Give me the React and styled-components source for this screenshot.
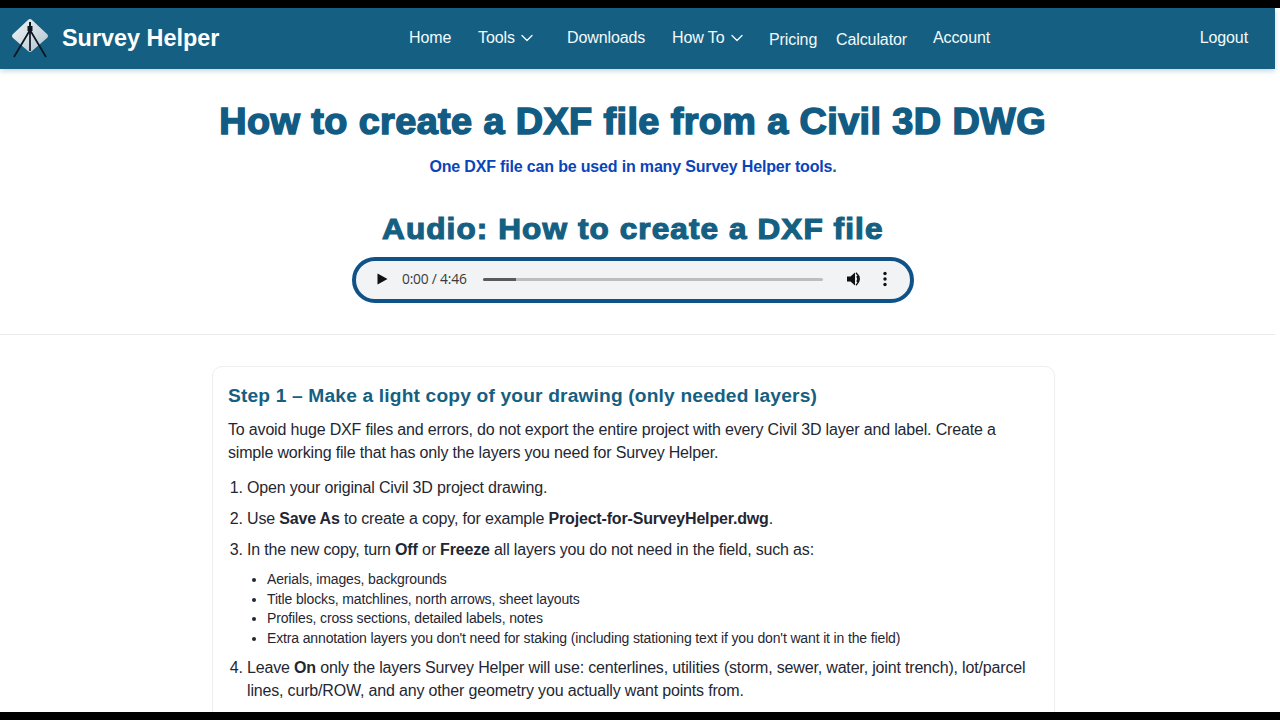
import React from 'react';
import styled, { createGlobalStyle } from 'styled-components';
import { ChevronDown } from 'lucide-react';

const Global = createGlobalStyle`
  html, body { margin: 0; padding: 0; height: 100%; background: #000; overflow: hidden; }
  #root { height: 100%; }
  * { box-sizing: border-box; }
`;

const Frame = styled.div`
  width: 1280px; height: 720px; background: #000; padding: 8px 0;
  font-family: "Liberation Sans", Arial, sans-serif; overflow: hidden;
`;
const Page = styled.div`
  width: 1280px; height: 704px; background: #fff; overflow: hidden;
`;
const Content = styled.div`width: 1275px;`;
const NavBar = styled.header`
  height: 61px; background: #156082; display: flex; align-items: center;
  box-shadow: 0 2px 5px rgba(21, 96, 130, 0.25); color: #fff; position: relative;
`;
const Brand = styled.div`
  width: 409px; display: flex; align-items: center; padding-left: 11px; gap: 13px;
  font-size: 23.4px; font-weight: 700; color: #fff;
  padding-bottom: 1px;
`;
const Links = styled.nav`display: flex; align-items: center; flex: 1;`;
const Link = styled.a`
  display: flex; align-items: center; font-size: 16px; letter-spacing: -0.1px; color: #f2fafd; white-space: nowrap;
  width: ${p => p.$w}px; height: 24px; padding-top: ${p => p.$drop ? 4 : 0}px; padding-bottom: 2px;
`;
const Chev = styled(ChevronDown)`margin-left: ${p => p.$ml}px; flex: none;`;
const Logout = styled.a`font-size: 16px; letter-spacing: -0.1px; color: #f2fafd; margin-right: 27px; padding-bottom: 2px;`;

const Main = styled.main`width: 1267px; text-align: center;`;
const Hero = styled.section`padding-top: 31px; height: 266px; border-bottom: 1px solid #e8eaec; width: 1275px;`;
const HeroInner = styled.div`width: 1266px; display: flex; flex-direction: column; align-items: center;`;
const Title = styled.h1`
  margin: 0; font-size: 36px; line-height: 44px; font-weight: 700; color: #125c84;
  letter-spacing: 0.39px; -webkit-text-stroke: 1.5px #125c84; white-space: nowrap;
  transform: scaleX(1.05);
`;
const Sub = styled.p`
  margin: 13px 0 0; font-size: 16px; letter-spacing: -0.17px; line-height: 20px; font-weight: 700; color: #0b44b8;
  span { color: #156082; }
`;
const AudioTitle = styled.h2`
  margin: 32px 0 0; font-size: 30px; line-height: 40px; font-weight: 700; color: #156082;
  letter-spacing: 1.05px; -webkit-text-stroke: 1.2px #156082; white-space: nowrap;
  transform: scaleX(1.05);
`;
const Player = styled.div`
  margin-top: 8px; width: 562px; height: 46px; border: 4px solid #0f5288; border-radius: 23px;
  background: #f1f3f5; display: flex; align-items: center; padding: 0 15px 2px 19px;
`;
const Time = styled.span`
  font-family: "Open Sans", sans-serif; font-size: 13.8px; color: #3a3a3a; margin-left: 13px;
  width: 81px; white-space: nowrap; text-align: left; letter-spacing: -0.2px; padding-bottom: 2px;
`;
const Track = styled.div`
  width: 340px; height: 3px; border-radius: 2px; background: #bdbdbd; overflow: hidden;
`;
const Progress = styled.div`height: 100%; background: #5a5a5a;`;
const Vol = styled.svg`margin-left: 22px; flex: none;`;
const Dots = styled.svg`margin-left: 19px; flex: none;`;
const PlayIcon = styled.svg`flex: none;`;

const Card = styled.article`
  width: 843px; margin: 31px auto 0; border: 1px solid #eceef0; border-radius: 10px; background: #fff;
  padding: 16px 15px 0; text-align: left; color: #1f2733; height: 500px;
`;
const StepTitle = styled.h3`
  margin: 0; font-size: 19.2px; line-height: 26px; font-weight: 700; color: #156082; letter-spacing: 0.16px;
`;
const Para = styled.p`margin: 9px 0 0; font-size: 16px; letter-spacing: -0.17px; line-height: 23px;`;
const Steps = styled.ol`margin: 12px 0 0; padding: 0 0 0 19px; font-size: 16px; letter-spacing: -0.17px; line-height: 23px;`;
const Step = styled.li`margin-bottom: 8px;`;
const SubList = styled.ul`
  margin: 9px 0 0; padding-left: 20px; font-size: 14px; letter-spacing: -0.14px; line-height: 19.6px; list-style: disc;
`;

const Logo = () => (
  <svg width="38" height="40" viewBox="0 0 38 40">
    <defs>
      <linearGradient id="d" x1="0" y1="0" x2="1" y2="1">
        <stop offset="0" stopColor="#f0f4f6" />
        <stop offset="0.5" stopColor="#d3dde4" />
        <stop offset="1" stopColor="#aebfcc" />
      </linearGradient>
    </defs>
    <path d="M19 1 Q20 1 21 2 L36 16 Q38 18 36 20 L21 33 Q19 35 17 33 L2 20 Q0 18 2 16 L17 2 Q18 1 19 1Z" fill="url(#d)" />
    <path d="M19 12 L3 39 M19 12 L19 33 M19 12 L35 39" stroke="#0d1620" strokeWidth="1.7" fill="none" />
    <rect x="16.5" y="8" width="5" height="5" fill="#0d1620" />
    <rect x="18" y="4" width="2" height="4" fill="#0d1620" />
  </svg>
);

export default function App() {
  return (
    <Frame>
      <Global />
      <Page>
        <Content>
          <NavBar>
            <Brand><Logo />Survey Helper</Brand>
            <Links>
              <Link $w={69}>Home</Link>
              <Link $w={89}>Tools<Chev $ml={2} size={20} strokeWidth={1.6} /></Link>
              <Link $w={105}>Downloads</Link>
              <Link $w={97}>How To<Chev $ml={3} size={20} strokeWidth={1.6} /></Link>
              <Link $w={67} $drop>Pricing</Link>
              <Link $w={97} $drop>Calculator</Link>
              <Link $w={70}>Account</Link>
            </Links>
            <Logout>Logout</Logout>
          </NavBar>
          <Hero>
            <HeroInner>
              <Title>How to create a DXF file from a Civil 3D DWG</Title>
              <Sub>One DXF file can be used in many Survey Helper tools<span>.</span></Sub>
              <AudioTitle>Audio: How to create a DXF file</AudioTitle>
              <Player>
                <PlayIcon width="14" height="14" viewBox="0 0 14 14"><path d="M2.5 1.5 L12.5 7 L2.5 12.5Z" fill="#111" /></PlayIcon>
                <Time>0:00 / 4:46</Time>
                <Track><Progress style={{ width: '33px' }} /></Track>
                <Vol width="18" height="18" viewBox="0 0 18 18">
                  <path d="M2 6.5 H5.5 L10 2.5 V15.5 L5.5 11.5 H2Z" fill="#111" />
                  <path d="M12 6 Q14 9 12 12" stroke="#111" strokeWidth="1.6" fill="none" />
                  <path d="M11 2.8 Q17.5 9 11 15.2" stroke="#111" strokeWidth="1.5" fill="none" />
                </Vol>
                <Dots width="6" height="16" viewBox="0 0 6 16">
                  <circle cx="3" cy="2.5" r="1.7" fill="#111" />
                  <circle cx="3" cy="8" r="1.7" fill="#111" />
                  <circle cx="3" cy="13.5" r="1.7" fill="#111" />
                </Dots>
              </Player>
            </HeroInner>
          </Hero>
          <Main>
            <Card>
              <StepTitle>Step 1 – Make a light copy of your drawing (only needed layers)</StepTitle>
              <Para>To avoid huge DXF files and errors, do not export the entire project with every Civil 3D layer and label. Create a simple working file that has only the layers you need for Survey Helper.</Para>
              <Steps>
                <Step>Open your original Civil 3D project drawing.</Step>
                <Step>Use <b>Save As</b> to create a copy, for example <b>Project-for-SurveyHelper.dwg</b>.</Step>
                <Step>In the new copy, turn <b>Off</b> or <b>Freeze</b> all layers you do not need in the field, such as:
                  <SubList>
                    <li>Aerials, images, backgrounds</li>
                    <li>Title blocks, matchlines, north arrows, sheet layouts</li>
                    <li>Profiles, cross sections, detailed labels, notes</li>
                    <li>Extra annotation layers you don't need for staking (including stationing text if you don't want it in the field)</li>
                  </SubList>
                </Step>
                <Step>Leave <b>On</b> only the layers Survey Helper will use: centerlines, utilities (storm, sewer, water, joint trench), lot/parcel lines, curb/ROW, and any other geometry you actually want points from.</Step>
              </Steps>
            </Card>
          </Main>
        </Content>
      </Page>
    </Frame>
  );
}
